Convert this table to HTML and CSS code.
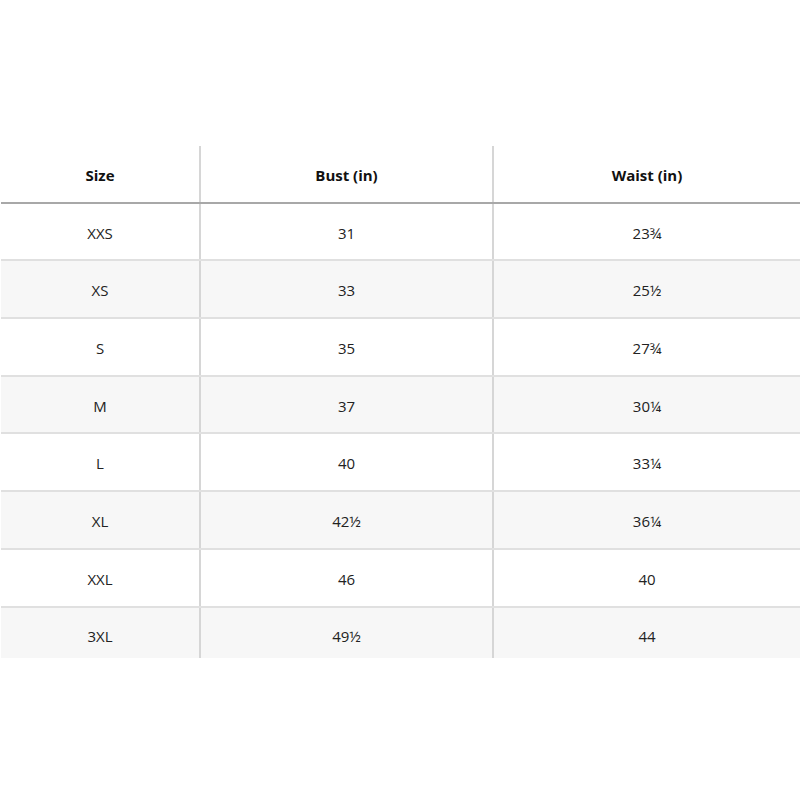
FILE: index.html
```html
<!DOCTYPE html>
<html>
<head>
<meta charset="utf-8">
<link rel="stylesheet" href="styles.css">
</head>
<body>
<div class="chart">
  <div class="row head">
    <div class="cell">Size</div><div class="cell">Bust (in)</div><div class="cell">Waist (in)</div>
  </div>
  <div class="row"><div class="cell">XXS</div><div class="cell">31</div><div class="cell">23¾</div></div>
  <div class="row alt"><div class="cell">XS</div><div class="cell">33</div><div class="cell">25½</div></div>
  <div class="row"><div class="cell">S</div><div class="cell">35</div><div class="cell">27¾</div></div>
  <div class="row alt"><div class="cell">M</div><div class="cell">37</div><div class="cell">30¼</div></div>
  <div class="row"><div class="cell">L</div><div class="cell">40</div><div class="cell">33¼</div></div>
  <div class="row alt"><div class="cell">XL</div><div class="cell">42½</div><div class="cell">36¼</div></div>
  <div class="row"><div class="cell">XXL</div><div class="cell">46</div><div class="cell">40</div></div>
  <div class="row alt last"><div class="cell">3XL</div><div class="cell">49½</div><div class="cell">44</div></div>
</div>
</body>
</html>
```
FILE: styles.css
```css
html, body {
  margin: 0;
  padding: 0;
  background: #fff;
}
body {
  font-family: "Open Sans", "Noto Sans", sans-serif;
  color: #222;
  font-size: 15px;
}
.chart {
  margin: 146px 0 0 1px;
  display: flex;
  flex-direction: column;
}
.row {
  display: grid;
  grid-template-columns: 198px 293px 1fr;
  border-bottom: 2px solid #e0e0e0;
  box-sizing: border-box;
  height: 57.7px;
}
.row.head {
  border-bottom: 2px solid #a8a8a8;
  font-weight: 700;
  color: #111;
}
.row.alt {
  background: #f7f7f7;
}
.row.last {
  border-bottom: none;
  height: 50px;
}
.cell {
  display: flex;
  align-items: center;
  justify-content: center;
  padding-top: 2px;
}
.row.last .cell {
  padding-top: 7px;
}
.cell + .cell {
  border-left: 2px solid #d6d6d6;
}
```
